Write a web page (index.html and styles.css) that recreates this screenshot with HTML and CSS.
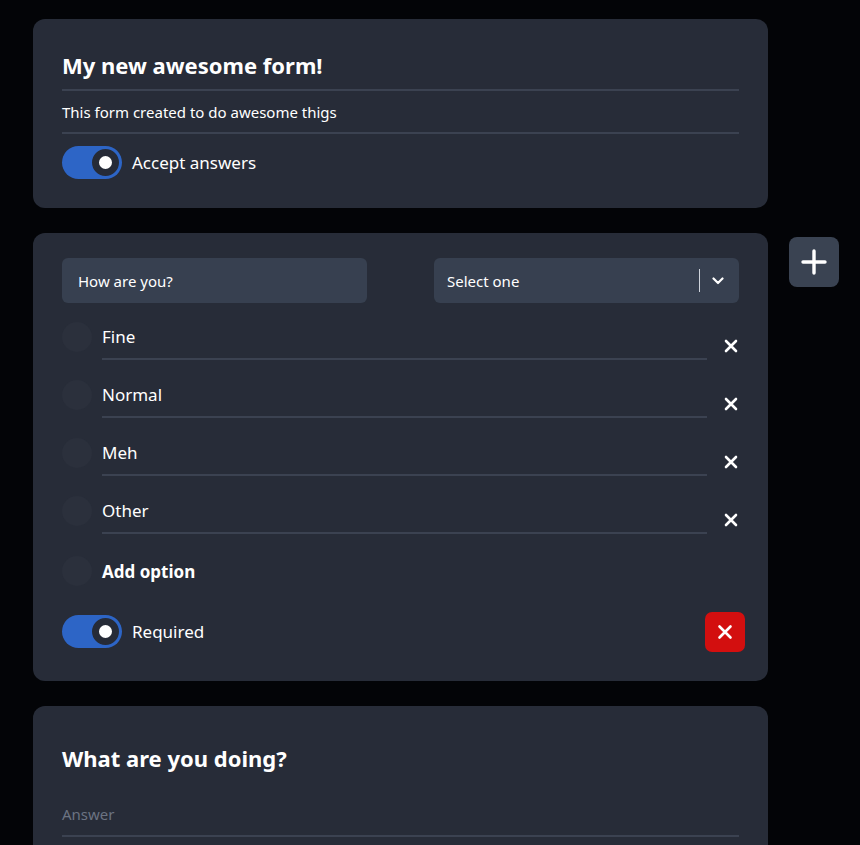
FILE: index.html
```html
<!DOCTYPE html>
<html>
<head>
<meta charset="utf-8">
<link rel="stylesheet" href="styles.css">
</head>
<body>
<div class="page">
  <div class="column">
    <section class="card card-head">
      <h1 class="form-title">My new awesome form!</h1>
      <p class="form-desc">This form created to do awesome thigs</p>
      <div class="switch-row">
        <span class="toggle"><span class="knob"></span></span>
        <span class="switch-label">Accept answers</span>
      </div>
    </section>

    <section class="card card-question">
      <div class="q-top">
        <div class="q-input">How are you?</div>
        <div class="q-select">
          <span class="sel-text">Select one</span>
          <span class="sel-sep"></span>
          <svg class="sel-chev" width="12" height="8" viewBox="0 0 12 8"><path d="M1.5 1.5 L6 6 L10.5 1.5" fill="none" stroke="#fff" stroke-width="2.2" stroke-linecap="round" stroke-linejoin="round"/></svg>
        </div>
      </div>
      <div class="options">
        <div class="opt">
          <span class="radio"></span>
          <span class="opt-text">Fine</span>
          <svg class="opt-x" width="14" height="14" viewBox="0 0 14 14"><path d="M2 2 L12 12 M12 2 L2 12" stroke="#fff" stroke-width="2.6" stroke-linecap="round"/></svg>
        </div>
        <div class="opt">
          <span class="radio"></span>
          <span class="opt-text">Normal</span>
          <svg class="opt-x" width="14" height="14" viewBox="0 0 14 14"><path d="M2 2 L12 12 M12 2 L2 12" stroke="#fff" stroke-width="2.6" stroke-linecap="round"/></svg>
        </div>
        <div class="opt">
          <span class="radio"></span>
          <span class="opt-text">Meh</span>
          <svg class="opt-x" width="14" height="14" viewBox="0 0 14 14"><path d="M2 2 L12 12 M12 2 L2 12" stroke="#fff" stroke-width="2.6" stroke-linecap="round"/></svg>
        </div>
        <div class="opt">
          <span class="radio"></span>
          <span class="opt-text">Other</span>
          <svg class="opt-x" width="14" height="14" viewBox="0 0 14 14"><path d="M2 2 L12 12 M12 2 L2 12" stroke="#fff" stroke-width="2.6" stroke-linecap="round"/></svg>
        </div>
        <div class="opt-add">
          <span class="radio"></span>
          <span class="add-text">Add option</span>
        </div>
      </div>
      <div class="q-bottom">
        <div class="switch-row">
          <span class="toggle"><span class="knob"></span></span>
          <span class="switch-label">Required</span>
        </div>
        <button class="del-btn">
          <svg width="16" height="16" viewBox="0 0 16 16"><path d="M2.5 2.5 L13.5 13.5 M13.5 2.5 L2.5 13.5" stroke="#fff" stroke-width="2.6" stroke-linecap="round"/></svg>
        </button>
      </div>
    </section>

    <section class="card card-text">
      <h2 class="q-title">What are you doing?</h2>
      <div class="answer">Answer</div>
    </section>
  </div>
  <div class="side">
    <button class="add-btn">
      <svg width="28" height="28" viewBox="0 0 28 28"><path d="M14 3 V25 M3 14 H25" stroke="#fff" stroke-width="3.4" stroke-linecap="round"/></svg>
    </button>
  </div>
</div>
</body>
</html>
```
FILE: styles.css
```css
* { box-sizing: border-box; }
html, body { margin: 0; padding: 0; }
body {
  background: #030407;
  color: #fff;
  font-family: "Noto Sans", "Open Sans", sans-serif;
  height: 845px;
  overflow: hidden;
}
.page {
  display: flex;
  align-items: flex-start;
  padding: 19px 0 0 33px;
  gap: 21px;
}
.column {
  width: 735px;
  display: flex;
  flex-direction: column;
  gap: 25px;
}
.card {
  background: #272c38;
  border-radius: 12px;
  padding: 0 29px;
}
.card-head { padding-top: 32px; padding-bottom: 29px; }
.form-title {
  margin: 0;
  font-size: 22px;
  font-weight: 700;
  line-height: 29px;
  padding-bottom: 9px;
  border-bottom: 2px solid #3b4251;
}
.form-desc {
  margin: 0;
  font-size: 15px;
  line-height: 20px;
  padding: 11px 0 10px;
  border-bottom: 2px solid #3b4251;
}
.switch-row {
  display: flex;
  align-items: center;
  gap: 10px;
}
.card-head .switch-row { margin-top: 12px; }
.toggle {
  width: 60px;
  height: 33px;
  border-radius: 17px;
  background: #2d65c6;
  position: relative;
  display: inline-block;
}
.knob {
  position: absolute;
  right: 3px;
  top: 3px;
  width: 27px;
  height: 27px;
  border-radius: 50%;
  background: #fff;
  border: 7px solid #262b37;
}
.switch-label { font-size: 17px; }

.card-question { padding-top: 25px; padding-bottom: 30px; }
.q-top {
  display: flex;
  justify-content: space-between;
}
.q-input, .q-select {
  width: 305px;
  height: 45px;
  background: #374050;
  border-radius: 6px;
  display: flex;
  align-items: center;
  font-size: 15px;
}
.q-input { padding-left: 16px; }
.q-select { padding-left: 13px; padding-right: 15px; }
.sel-text { flex: 1; }
.sel-sep {
  width: 1px;
  height: 23px;
  background: #cfd4dc;
  margin-right: 12px;
}
.options { margin-top: 15px; }
.opt {
  display: flex;
  align-items: flex-start;
  height: 58px;
}
.radio {
  width: 30px;
  height: 30px;
  border-radius: 50%;
  background: #2b303c;
  flex: none;
  margin-top: 4px;
}
.opt-text {
  margin-left: 10px;
  width: 605px;
  height: 42px;
  font-size: 17px;
  line-height: 24px;
  padding-top: 7px;
  border-bottom: 2px solid #3b4251;
}
.opt-x { margin-left: 17px; margin-top: 21px; }
.opt-add {
  display: flex;
  align-items: center;
  height: 34px;
  margin-top: 4px;
}
.opt-add .radio { margin-top: 0; }
.add-text {
  margin-left: 10px;
  font-size: 17px;
  font-weight: 700;
}
.q-bottom {
  display: flex;
  justify-content: space-between;
  align-items: center;
  margin-top: 23px;
  margin-right: -6px;
}
.del-btn {
  width: 40px;
  height: 40px;
  border: none;
  border-radius: 7px;
  background: #d30f0f;
  display: flex;
  align-items: center;
  justify-content: center;
  padding: 0;
  margin: 1px 0 -1px;
}

.card-text { padding-top: 37px; padding-bottom: 40px; }
.q-title {
  margin: 0;
  font-size: 22px;
  font-weight: 700;
  line-height: 30px;
}
.answer {
  margin-top: 31px;
  font-size: 15px;
  color: #6b7382;
  padding-bottom: 11px;
  border-bottom: 2px solid #3b4251;
}

.side { padding-top: 218px; }
.add-btn {
  width: 50px;
  height: 50px;
  border: none;
  border-radius: 8px;
  background: #3a4352;
  display: flex;
  align-items: center;
  justify-content: center;
  padding: 0;
}
```
